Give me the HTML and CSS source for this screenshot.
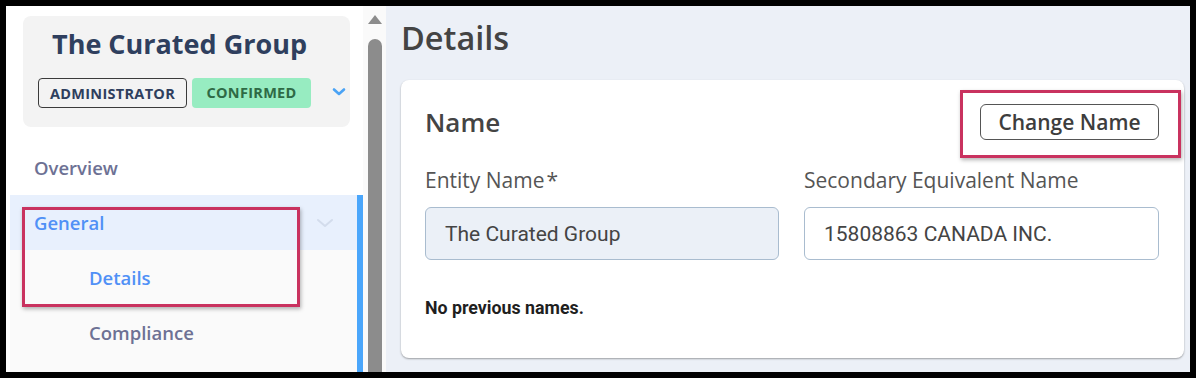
FILE: index.html
```html
<!DOCTYPE html>
<html>
<head>
<meta charset="utf-8">
<link rel="stylesheet" href="styles.css">
</head>
<body>
<div class="app">
  <aside class="sidebar">
    <nav class="nav">
      <div class="entity-card">
        <div class="entity-title">The Curated Group</div>
        <div class="badge-row">
          <span class="badge badge-role">ADMINISTRATOR</span>
          <span class="badge badge-status">CONFIRMED</span>
          <svg class="entity-chevron" width="14" height="10" viewBox="0 0 14 10"><path d="M2 2.5 L7 7 L12 2.5" fill="none" stroke="#4aa3f5" stroke-width="2.6" stroke-linecap="round" stroke-linejoin="round"/></svg>
        </div>
      </div>
      <div class="nav-item">Overview</div>
      <div class="nav-group">
        <div class="nav-item nav-item-active">
          <span>General</span>
          <svg class="nav-chevron" width="20" height="12" viewBox="0 0 20 12"><path d="M3 3 L10 9 L17 3" fill="none" stroke="#d3dcec" stroke-width="2" stroke-linecap="round" stroke-linejoin="round"/></svg>
        </div>
        <div class="sub-items">
          <div class="sub-item sub-item-active">Details</div>
          <div class="sub-item">Compliance</div>
        </div>
      </div>
    </nav>
    <div class="scrollbar">
      <div class="scroll-arrow"></div>
      <div class="scroll-thumb"></div>
    </div>
  </aside>
  <main class="main">
    <h1 class="page-title">Details</h1>
    <section class="card">
      <div class="card-header">
        <h2 class="card-title">Name</h2>
        <button class="btn-outline">Change Name</button>
      </div>
      <div class="field-grid">
        <div class="field">
          <label class="field-label">Entity Name<span class="req">*</span></label>
          <div class="input input-disabled">The Curated Group</div>
        </div>
        <div class="field">
          <label class="field-label">Secondary Equivalent Name</label>
          <div class="input">15808863 CANADA INC.</div>
        </div>
      </div>
      <p class="prev-names">No previous names.</p>
    </section>
  </main>
  <div class="highlight highlight-nav"></div>
  <div class="highlight highlight-btn"></div>
</div>
</body>
</html>
```

FILE: styles.css
```css
* { box-sizing: border-box; }
html, body { margin: 0; padding: 0; }
body {
  background: #000;
  padding: 6px;
  width: 1196px;
  height: 378px;
  overflow: hidden;
  font-family: "Open Sans", "Liberation Sans", sans-serif;
}
.app {
  position: relative;
  display: flex;
  width: 1184px;
  height: 366px;
  background: #fff;
  overflow: hidden;
}
.sidebar {
  display: flex;
  width: 380px;
  flex: 0 0 380px;
  background: #fff;
  border-left: 4px solid #fdfdfd;
}
.nav {
  width: 353px;
  flex: 0 0 353px;
  display: flex;
  flex-direction: column;
}
.entity-card {
  margin: 10px 0 13px 13px;
  width: 327px;
  height: 111px;
  background: #f3f3f3;
  border-radius: 8px;
  padding: 11px 0 0 15px;
}
.entity-title {
  font-size: 27px;
  line-height: 34px;
  font-weight: 700;
  color: #2f3f5e;
  padding-left: 14px;
}
.badge-row {
  display: flex;
  align-items: center;
  gap: 5px;
  margin-top: 17px;
}
.badge {
  flex: 0 0 auto;
  height: 30px;
  display: inline-flex;
  align-items: center;
  font-size: 14.5px;
  font-weight: 700;
  border-radius: 4px;
  letter-spacing: 0.3px;
}
.badge-role {
  border: 1px solid #3a3a3a;
  color: #2f3f5e;
  padding: 0;
  width: 149px;
  justify-content: center;
}
.badge-status {
  background: #97ecc1;
  color: #2e6a45;
  width: 119px;
  justify-content: center;
  margin-top: -1px;
}
.entity-chevron { flex: 0 0 auto; margin-left: 16px; margin-top: -2px; }
.nav-item {
  height: 55px;
  display: flex;
  align-items: center;
  justify-content: space-between;
  padding: 0 24px;
  font-size: 18.5px;
  font-weight: 600;
  color: #6d7194;
}
.nav-group {
  flex: 1;
  border-right: 6px solid #4aa6fb;
  display: flex;
  flex-direction: column;
}
.nav-item-active {
  background: #e8f0fd;
  color: #5090f6;
  padding-right: 22px;
}
.sub-items {
  flex: 1;
  background: #fafafa;
}
.sub-item {
  height: 55px;
  display: flex;
  align-items: center;
  padding-left: 79px;
  font-size: 18.5px;
  font-weight: 600;
  color: #6d7194;
}
.sub-item-active { color: #5090f6; }
.scrollbar {
  flex: 1;
  background: #fafafa;
  display: flex;
  flex-direction: column;
  align-items: center;
  padding-top: 9px;
}
.scroll-arrow {
  width: 0;
  height: 0;
  border-left: 7px solid transparent;
  border-right: 7px solid transparent;
  border-bottom: 9px solid #8c8c8c;
  margin-left: 1px;
}
.scroll-thumb {
  margin-top: 15px;
  width: 14px;
  flex: 1;
  background: #8c8c8c;
  border-radius: 7px 7px 0 0;
  margin-left: 1px;
}
.main {
  flex: 1;
  background: #ecf0f7;
  padding: 12px 6px 14px 15px;
  display: flex;
  flex-direction: column;
}
.page-title {
  margin: 0;
  font-size: 32.5px;
  line-height: 40px;
  font-weight: 600;
  color: #444;
}
.card {
  margin-top: 22px;
  flex: 1;
  background: #fff;
  border-radius: 8px;
  box-shadow: 0 1px 2px rgba(0,0,0,0.35);
  padding: 24px 25px 0 24px;
}
.card-header {
  display: flex;
  align-items: center;
  justify-content: space-between;
  height: 36px;
}
.card-title {
  margin: 0;
  font-size: 26px;
  font-weight: 600;
  color: #444;
  line-height: 36px;
}
.btn-outline {
  height: 36px;
  width: 179px;
  border: 1px solid #555;
  border-radius: 6px;
  background: #fff;
  font-family: "Open Sans", "Liberation Sans", sans-serif;
  font-size: 21px;
  font-weight: 600;
  color: #3d3d3d;
  padding: 0;
}
.field-grid {
  display: grid;
  grid-template-columns: 354px 355px;
  column-gap: 25px;
  margin-top: 26px;
}
.field-label {
  display: block;
  font-size: 21px;
  line-height: 28px;
  color: #555;
}
.req { margin-left: 2px; }
.input {
  margin-top: 13px;
  height: 53px;
  border: 1px solid #a9bccf;
  border-radius: 6px;
  background: #fff;
  display: flex;
  align-items: center;
  padding-left: 19px;
  font-family: Roboto, "Liberation Sans", sans-serif;
  font-size: 21px;
  color: #444;
}
.input-disabled { background: #ebf0f7; }
.prev-names {
  margin: 38px 0 0 0;
  font-family: Roboto, "Liberation Sans", sans-serif;
  font-size: 17.8px;
  line-height: 20px;
  font-weight: 700;
  color: #1f1f1f;
}
.highlight {
  position: absolute;
  border: 3px solid #c9325f;
  box-shadow: 1px 2px 4px rgba(0,0,0,0.3);
  pointer-events: none;
}
.highlight-nav { left: 16px; top: 201px; width: 278px; height: 100px; }
.highlight-btn { left: 954px; top: 84px; width: 221px; height: 68px; }
```
